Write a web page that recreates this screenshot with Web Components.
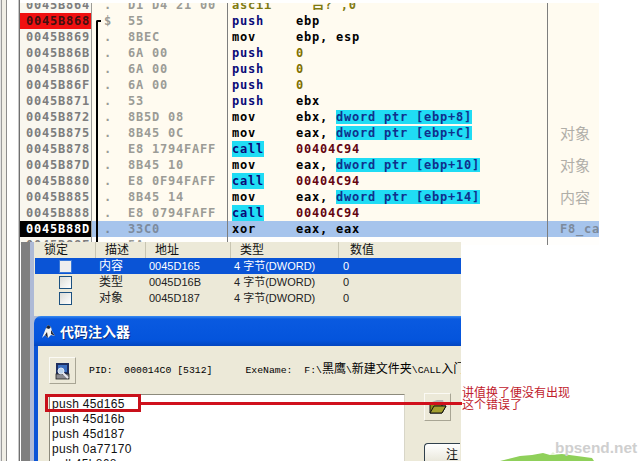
<!DOCTYPE html>
<html>
<head>
<meta charset="utf-8">
<style>
  html, body { margin: 0; padding: 0; background: #fff; }
  body { width: 643px; height: 461px; overflow: hidden; position: relative; font-family: "Liberation Sans", "Noto Sans CJK SC", sans-serif; }
</style>
</head>
<body>
<edge-lines></edge-lines>

<cpu-view>
  <asm-row addr="0045B864" mark="." hex="D1 D4 21 00" op="ascii" args="  吕? ,0" kind="data"></asm-row>
  <asm-row addr="0045B868" mark="$" hex="55" op="push" args="ebp" state="bp"></asm-row>
  <asm-row addr="0045B869" mark="." hex="8BEC" op="mov" args="ebp, esp"></asm-row>
  <asm-row addr="0045B86B" mark="." hex="6A 00" op="push" args="0" kind="imm"></asm-row>
  <asm-row addr="0045B86D" mark="." hex="6A 00" op="push" args="0" kind="imm"></asm-row>
  <asm-row addr="0045B86F" mark="." hex="6A 00" op="push" args="0" kind="imm"></asm-row>
  <asm-row addr="0045B871" mark="." hex="53" op="push" args="ebx"></asm-row>
  <asm-row addr="0045B872" mark="." hex="8B5D 08" op="mov" args="ebx, " mem="dword ptr [ebp+8]"></asm-row>
  <asm-row addr="0045B875" mark="." hex="8B45 0C" op="mov" args="eax, " mem="dword ptr [ebp+C]" note="对象"></asm-row>
  <asm-row addr="0045B878" mark="." hex="E8 1794FAFF" op="call" args="00404C94" kind="target"></asm-row>
  <asm-row addr="0045B87D" mark="." hex="8B45 10" op="mov" args="eax, " mem="dword ptr [ebp+10]" note="对象"></asm-row>
  <asm-row addr="0045B880" mark="." hex="E8 0F94FAFF" op="call" args="00404C94" kind="target"></asm-row>
  <asm-row addr="0045B885" mark="." hex="8B45 14" op="mov" args="eax, " mem="dword ptr [ebp+14]" note="内容"></asm-row>
  <asm-row addr="0045B888" mark="." hex="E8 0794FAFF" op="call" args="00404C94" kind="target"></asm-row>
  <asm-row addr="0045B88D" mark="." hex="33C0" op="xor" args="eax, eax" note="F8_call" state="cur"></asm-row>
  <asm-row addr="0045B88F" mark="." hex="5A" op="" args="" state="tail"></asm-row>
</cpu-view>

<watch-panel>
  <watch-table>
    <watch-row sel name="内容" addr="0045D165" type="4 字节(DWORD)" val="0"></watch-row>
    <watch-row name="类型" addr="0045D16B" type="4 字节(DWORD)" val="0"></watch-row>
    <watch-row name="对象" addr="0045D187" type="4 字节(DWORD)" val="0"></watch-row>
  </watch-table>
  <injector-window>
    <code-line>push 45d165</code-line>
    <code-line>push 45d16b</code-line>
    <code-line>push 45d187</code-line>
    <code-line>push 0a77170</code-line>
    <code-line>call 45b868</code-line>
  </injector-window>
</watch-panel>

<red-note></red-note>
<site-mark></site-mark>

<script>
class EdgeLines extends HTMLElement {
  constructor() {
    super();
    this.attachShadow({ mode: 'open' });
    this.shadowRoot.innerHTML = `
      <style>
        :host { position: absolute; left: 0; top: 0; width: 21px; height: 461px; display: flex; }
        i { display: block; height: 100%; }
      </style>
      <i style="width:1px;background:#e4e4e4"></i>
      <i style="width:1px;background:#9a9a9a"></i>
      <i style="width:4px;background:#f0eee6"></i>
      <i style="width:1px;background:#8c8c8c"></i>
      <i style="width:11px;background:#fff"></i>
      <i style="width:1px;background:#c8c8c8"></i>
      <i style="width:1px;background:#707070"></i>
    `;
  }
}
customElements.define('edge-lines', EdgeLines);

class CpuView extends HTMLElement {
  constructor() {
    super();
    this.attachShadow({ mode: 'open' });
    this.shadowRoot.innerHTML = `
      <style>
        :host { position: absolute; left: 20px; top: 3px; width: 579px; height: 242px; overflow: hidden; display: block; background: #fffbf0; }
        .rows { display: flex; flex-direction: column; margin-top: -6px; }
        .bracket { position: absolute; left: 76px; top: 17px; width: 5px; height: 222px; border-left: 2px solid #000; border-top: 2px solid #000; border-top-left-radius: 2px; box-sizing: border-box; }
      </style>
      <div class="rows"><slot></slot></div>
      <div class="bracket"></div>
    `;
  }
}
customElements.define('cpu-view', CpuView);

class AsmRow extends HTMLElement {
  constructor() {
    super();
    this.attachShadow({ mode: 'open' });
    this.shadowRoot.innerHTML = `
      <style>
        :host {
          display: grid; grid-template-columns: 72px 136px 320px 51px; height: 16px;
          font: bold 12px/16px "DejaVu Sans Mono", "Noto Sans CJK SC", monospace;
          letter-spacing: .776px;
        }
        div { height: 16px; overflow: hidden; box-sizing: border-box; white-space: pre; }
        .a { background: #f9f7ef; color: #7d7d7d; padding-left: 6px; border-right: 1px solid #9c9c98; }
        .h { color: #9b9b96; padding-left: 12px; border-right: 1px solid #7e7e7e; display: flex; }
        .h b { width: 24px; font-weight: bold; flex: none; }
        .d { padding-left: 4px; color: #000; border-right: 1px solid #7e7e7e; }
        .op { display: inline-block; width: 64px; }
        .op span { display: inline-block; }
        .n { color: #a4a4a0; padding-left: 12px; }
        .cjk { font: 15px/16px "Noto Sans CJK SC", sans-serif; letter-spacing: 0; color: #b0aea8; }
        .push { color: #0a0a78; }
        .call { color: #0a0a78; background: #20dcf4; }
        .imm { color: #7f7000; }
        .target { color: #640410; }
        .data { color: #7f7a10; }
        .mem { background: #20dcf4; color: #10308c; }
        :host([state="bp"]) .a { background: #f01010; color: #401010; }
        :host([state="cur"]) .a { background: #000; color: #fff; }
        :host([state="cur"]) { background: #a6c4ec; }
        :host([state="cur"]) .h { background: #a6c4ec; color: #7c8a9c; }
        :host([state="cur"]) .d { background: #a6c4ec; }
        :host([state="cur"]) .n { background: #a6c4ec; color: #7c8a9c; }
        :host([state="tail"]) { background: #fffefc; }
      </style>
      <div class="a"></div>
      <div class="h"><b></b><span></span></div>
      <div class="d"></div>
      <div class="n"></div>
    `;
  }
  connectedCallback() {
    const root = this.shadowRoot;
    const op = this.getAttribute('op') || '';
    const args = this.getAttribute('args') || '';
    const kind = this.getAttribute('kind');
    const mem = this.getAttribute('mem');
    const note = this.getAttribute('note');
    root.querySelector('.a').textContent = this.getAttribute('addr');
    root.querySelector('.h b').textContent = this.getAttribute('mark');
    root.querySelector('.h span').textContent = this.getAttribute('hex');

    const d = root.querySelector('.d');
    const opBox = document.createElement('span');
    opBox.className = 'op';
    const opText = document.createElement('span');
    opText.textContent = op;
    opText.className = kind === 'data' ? 'data' : (op === 'push' || op === 'call') ? op : '';
    opBox.appendChild(opText);
    d.appendChild(opBox);

    const argText = document.createElement('span');
    argText.textContent = args;
    if (kind) argText.className = kind;
    d.appendChild(argText);
    if (mem) {
      const m = document.createElement('span');
      m.className = 'mem';
      m.textContent = mem;
      d.appendChild(m);
    }
    if (note) {
      const n = root.querySelector('.n');
      n.textContent = note;
      if (!/^[A-Z]/.test(note)) n.classList.add('cjk');
    }
  }
}
customElements.define('asm-row', AsmRow);

class WatchPanel extends HTMLElement {
  constructor() {
    super();
    this.attachShadow({ mode: 'open' });
    this.shadowRoot.innerHTML = `
      <style>
        :host { position: absolute; left: 21px; top: 242px; width: 440px; height: 219px; background: #7f7f7f; padding-left: 9px; box-sizing: border-box; display: block; overflow: hidden; }
        .inner { height: 100%; padding-left: 4px; background: #aebad6; display: flex; flex-direction: column; }
      </style>
      <div class="inner"><slot></slot></div>
    `;
  }
}
customElements.define('watch-panel', WatchPanel);

class WatchTable extends HTMLElement {
  constructor() {
    super();
    this.attachShadow({ mode: 'open' });
    this.shadowRoot.innerHTML = `
      <style>
        :host { display: block; height: 74px; flex: none; background: #ece9d8; padding-left: 1px; font: 12px/16px "Liberation Sans", "Noto Sans CJK SC", sans-serif; color: #111; }
        .head { display: grid; grid-template-columns: 61px 50px 85px 108px 1fr; height: 16px; }
        .head span { box-shadow: inset -1px 0 0 #c8c5b2; padding-left: 9px; box-sizing: border-box; }
        .head span:last-child { box-shadow: none; padding-left: 11px; }
      </style>
      <div class="head"><span>锁定</span><span>描述</span><span>地址</span><span>类型</span><span>数值</span></div>
      <slot></slot>
    `;
  }
}
customElements.define('watch-table', WatchTable);

class WatchRow extends HTMLElement {
  constructor() {
    super();
    this.attachShadow({ mode: 'open' });
    this.shadowRoot.innerHTML = `
      <style>
        :host { display: grid; grid-template-columns: 64px 50px 85px 109px 1fr; height: 16px; align-items: center; font-size: 11px; line-height: 16px; color: #222; }
        :host([sel]) { background: #0a54d6; color: #fff; }
        .box { width: 13px; height: 13px; margin-left: 24px; box-sizing: border-box; border: 1px solid #1c5180; background: linear-gradient(135deg, #dcdcd7, #fff); }
        :host([sel]) .box { border-color: #3a78d8; background: #eee; }
        .cjk { font-size: 12px; }
      </style>
      <div class="box"></div>
      <span class="cjk name"></span>
      <span class="addr"></span>
      <span class="type"></span>
      <span class="val"></span>
    `;
  }
  connectedCallback() {
    for (const k of ['name', 'addr', 'type', 'val']) {
      this.shadowRoot.querySelector('.' + k).textContent = this.getAttribute(k);
    }
  }
}
customElements.define('watch-row', WatchRow);

class InjectorWindow extends HTMLElement {
  constructor() {
    super();
    this.attachShadow({ mode: 'open' });
    this.shadowRoot.innerHTML = `
      <style>
        :host { display: flex; flex-direction: column; flex: 1; min-height: 0; overflow: hidden; }
        .title {
          height: 30px; flex: none; display: flex; align-items: center; gap: 4px; padding-left: 6px;
          border-radius: 7px 0 0 0;
          background: linear-gradient(#3a8cf0 0, #0a5ae0 3px, #0454dc 24px, #0346c0 30px);
          color: #fff; font: bold 14px "Noto Sans CJK SC", sans-serif; text-shadow: 1px 1px 0 #0a2f80;
        }
        .body { flex: 1; min-height: 0; border-left: 4px solid #0a54d6; background: #ece9d8; display: flex; flex-direction: column; padding: 11px 0 0 11px; }
        .info { display: flex; align-items: center; height: 27px; flex: none; font: 9.8px/27px "Liberation Mono", "Noto Sans CJK SC", monospace; color: #000; white-space: pre; }
        .pid { margin-left: 13px; }
        .exe { margin-left: 33px; }
        .cjk { font: 12px "Noto Sans CJK SC", sans-serif; }
        .btn { width: 27px; height: 27px; flex: none; box-sizing: border-box; background: #ece9d8; border: 1px solid; border-color: #fbfaf4 #a8a594 #a8a594 #fbfaf4; display: flex; align-items: center; justify-content: center; }
        .work { display: flex; flex: 1; min-height: 0; margin-top: 10px; }
        .list { width: 356px; flex: none; box-sizing: border-box; background: #fff; border: 1px solid #8c8a7c; border-bottom: 0; border-right-color: #d8d6c8; padding: 2px 0 0 2px; overflow: hidden; }
        .side { display: flex; flex-direction: column; padding-left: 19px; margin-top: -1px; }
        .go { margin-top: 22px; width: 36px; height: 22px; box-sizing: border-box; border: 1px solid #30404c; border-right: 0; border-radius: 4px 0 0 4px; background: linear-gradient(#fff, #e6e4d6); font: 12px/20px "Noto Sans CJK SC", sans-serif; padding-left: 21px; color: #111; }
      </style>
      <div class="title">
        <svg width="16" height="17" viewBox="0 0 16 17">
          <path d="M2 15 L6 5 L8 2 L11 4 L12 8 L15 13 L11 12 L8 15 L5 12 Z" fill="#f4f4f0"/>
          <path d="M6 5 L8 2 L11 4 L9 6 Z M5 12 L8 15 L7 9 Z M11 7 L15 13 L11 11 Z" fill="#1c2438"/>
        </svg>
        <span>代码注入器</span>
      </div>
      <div class="body">
        <div class="info">
          <div class="btn">
            <svg width="18" height="18" viewBox="0 0 18 18">
              <rect x="2" y="1" width="13" height="11" fill="#1f2f5f"/>
              <rect x="4" y="3" width="9" height="7" fill="#3c6fc0"/>
              <rect x="2" y="12" width="13" height="5" fill="#8a8a90" stroke="#222" stroke-width=".8"/>
              <circle cx="7" cy="9" r="3" fill="#bcd4ee" stroke="#dfe7f0"/>
              <path d="M9 11 L14 16" stroke="#e8e8f0" stroke-width="2"/>
            </svg>
          </div>
          <span class="pid">PID:  000014C0 [5312]</span>
          <span class="exe">ExeName:  F:\\<span class="cjk">黑鹰</span>\\<span class="cjk">新建文件夹</span>\\CALL<span class="cjk">入门</span></span>
        </div>
        <div class="work">
          <div class="list"><slot></slot></div>
          <div class="side">
            <div class="btn" style="height:28px">
              <svg width="18" height="16" viewBox="0 0 18 16">
                <path d="M3 3 L8 1 L14 1 L15 5 L4 6 Z" fill="#b8b8b8"/>
                <path d="M1 14 L1 5 L13 5 L13 7 L17 7 L13 14 Z" fill="#8a8a1c" stroke="#111" stroke-width="1"/>
                <path d="M1 14 L5 7 L17 7 L13 14 Z" fill="#a4a030" stroke="#111" stroke-width="1"/>
              </svg>
            </div>
            <div class="go">注</div>
          </div>
        </div>
      </div>
    `;
  }
}
customElements.define('injector-window', InjectorWindow);

class CodeLine extends HTMLElement {
  constructor() {
    super();
    this.attachShadow({ mode: 'open' });
    this.shadowRoot.innerHTML = `
      <style>
        :host { display: block; height: 15px; font: 12px/15px "Liberation Sans", sans-serif; letter-spacing: .3px; color: #111; white-space: nowrap; }
      </style>
      <slot></slot>
    `;
  }
}
customElements.define('code-line', CodeLine);

class RedNote extends HTMLElement {
  constructor() {
    super();
    this.attachShadow({ mode: 'open' });
    this.shadowRoot.innerHTML = `
      <style>
        :host { position: absolute; left: 45px; top: 386px; display: flex; align-items: flex-start; }
        .mark { display: flex; align-items: center; margin-top: 8px; }
        .box { width: 96px; height: 18px; box-sizing: border-box; border: 3px solid #c8101a; flex: none; }
        .line { width: 321px; height: 3px; background: #d0101c; flex: none; }
        .text { font: 12px/12px "Noto Sans CJK SC", sans-serif; color: #c0202c; white-space: nowrap; }
      </style>
      <div class="mark"><div class="box"></div><div class="line"></div></div>
      <div class="text">讲值换了便没有出现<br>这个错误了</div>
    `;
  }
}
customElements.define('red-note', RedNote);

class SiteMark extends HTMLElement {
  constructor() {
    super();
    this.attachShadow({ mode: 'open' });
    this.shadowRoot.innerHTML = `
      <style>
        :host { position: absolute; left: 490px; top: 440px; width: 153px; height: 21px; display: block; overflow: hidden; }
        svg { position: absolute; left: 0; top: 0; }
        span { position: absolute; left: 65px; top: -1px; font: bold 15.4px/18px "Liberation Sans", sans-serif; color: #cfcfcf; }
      </style>
      <svg width="153" height="21" viewBox="0 0 153 21">
        <path d="M10 21 L30 16 L42 15 L53 13 L60 15 L72 14 L102 18 L104 21 Z" fill="#8fd05a"/>
        <path d="M60 15 L63 12 L66 15 Z" fill="#e4f4d0"/>
      </svg>
      <span>bpsend.net</span>
    `;
  }
}
customElements.define('site-mark', SiteMark);
</script>
</body>
</html>
